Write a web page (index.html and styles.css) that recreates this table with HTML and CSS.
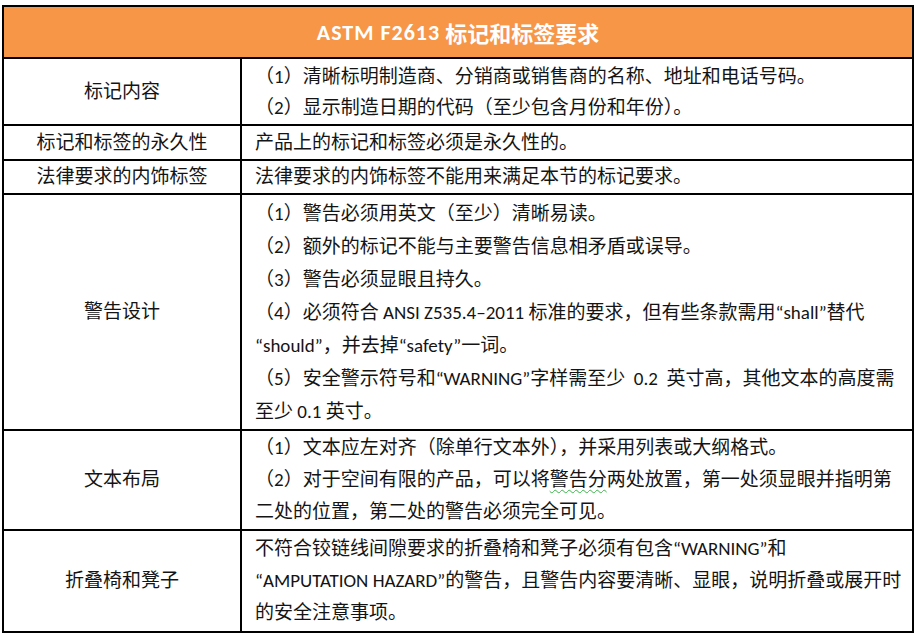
FILE: index.html
```html
<!DOCTYPE html>
<html lang="zh-CN">
<head>
<meta charset="utf-8">
<title>ASTM F2613 标记和标签要求</title>
<link rel="stylesheet" href="styles.css">
</head>
<body>
<div class="sheet">
  <div class="head"><span class="head-code">ASTM F2613</span>&nbsp;标记和标签要求</div>

  <div class="label">标记内容</div>
  <div class="body lh31">
    <p>（1）清晰标明制造商、分销商或销售商的名称、地址和电话号码。</p>
    <p>（2）显示制造日期的代码（至少包含月份和年份）。</p>
  </div>

  <div class="label">标记和标签的永久性</div>
  <div class="body">
    <p>产品上的标记和标签必须是永久性的。</p>
  </div>

  <div class="label">法律要求的内饰标签</div>
  <div class="body">
    <p>法律要求的内饰标签不能用来满足本节的标记要求。</p>
  </div>

  <div class="label">警告设计</div>
  <div class="body lh33">
    <p>（1）警告必须用英文（至少）清晰易读。</p>
    <p>（2）额外的标记不能与主要警告信息相矛盾或误导。</p>
    <p>（3）警告必须显眼且持久。</p>
    <p>（4）必须符合 ANSI Z535.4–2011 标准的要求，但有些条款需用“shall”替代<br>“should”，并去掉“safety”一词。</p>
    <p>（5）安全警示符号和“WARNING”字样需至少&nbsp; 0.2&nbsp; 英寸高，其他文本的高度需<br>至少 0.1 英寸。</p>
  </div>

  <div class="label">文本布局</div>
  <div class="body lh32">
    <p>（1）文本应左对齐（除单行文本外），并采用列表或大纲格式。</p>
    <p>（2）对于空间有限的产品，可以将<span class="spell">警告分</span>两处放置，第一处须显眼并指明第<br>二处的位置，第二处的警告必须完全可见。</p>
  </div>

  <div class="label">折叠椅和凳子</div>
  <div class="body lh32">
    <p>不符合铰链线间隙要求的折叠椅和凳子必须有包含“WARNING”和<br>“AMPUTATION HAZARD”的警告，且警告内容要清晰、显眼，说明折叠或展开时<br>的安全注意事项。</p>
  </div>
</div>
</body>
</html>
```

FILE: styles.css
```css
html, body {
  background: #ffffff;
}

body {
  margin: 5px 0 0 2px;
  font-family: "Carlito", "Lato", "Noto Sans CJK SC", sans-serif;
  font-size: 19px;
  color: #141414;
}

.sheet {
  display: grid;
  grid-template-columns: 236px 670px;
  grid-template-rows: 50px 65px 33px 32px 234px 98px 100px;
  gap: 2px;
  padding: 2px;
  width: 908px;
  background: #000000;
}

.head {
  grid-column: 1 / -1;
  background: #f79646;
  color: #ffffff;
  font-weight: 700;
  font-size: 22px;
  display: flex;
  align-items: center;
  justify-content: center;
  white-space: nowrap;
}

.head-code {
  letter-spacing: 1px;
}

.label {
  background: #ffffff;
  display: flex;
  align-items: center;
  justify-content: center;
  line-height: 32px;
}

.body {
  background: #ffffff;
  display: flex;
  flex-direction: column;
  justify-content: center;
  padding: 0 4px 0 13px;
  white-space: nowrap;
  line-height: 32px;
}

.body p {
  margin: 0;
}

.lh31 {
  line-height: 31px;
}

.lh32 {
  line-height: 32px;
}

.lh33 {
  line-height: 33px;
}

.spell {
  text-decoration: underline wavy #3cb44b;
  text-decoration-thickness: 1px;
  text-underline-offset: 3px;
}
```
